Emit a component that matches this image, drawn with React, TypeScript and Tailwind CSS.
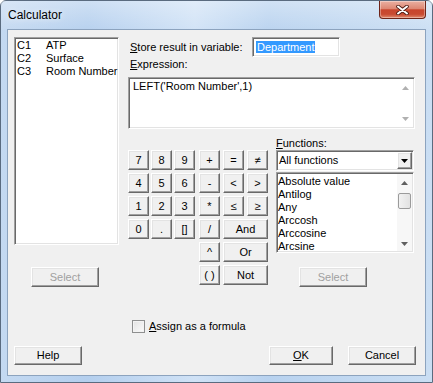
import React from "react";

type BtnProps = {
  children?: React.ReactNode;
  className?: string;
  disabled?: boolean;
};

function Raised({ children, className = "", disabled = false }: BtnProps) {
  return (
    <div
      className={
        "flex items-center justify-center bg-[#f0f0f0] border border-t-white border-l-white border-r-[#696969] border-b-[#696969] shadow-[inset_-1px_-1px_0_#a0a0a0,inset_1px_1px_0_#e3e3e3] text-[11px] leading-none " +
        (disabled ? "text-[#a0a0a0] " : "text-black ") +
        className
      }
    >
      {children}
    </div>
  );
}

const sunken =
  "bg-white border border-t-[#a0a0a0] border-l-[#a0a0a0] border-r-white border-b-white shadow-[inset_1px_1px_0_#696969,inset_-1px_-1px_0_#e3e3e3]";

function Tri({ up, color }: { up?: boolean; color: string }) {
  return (
    <svg width="7" height="4" viewBox="0 0 7 4">
      {up ? (
        <path d="M0 4 L3.5 0 L7 4 Z" fill={color} />
      ) : (
        <path d="M0 0 L7 0 L3.5 4 Z" fill={color} />
      )}
    </svg>
  );
}

export default function App() {
  const digits = ["7", "8", "9", "4", "5", "6", "1", "2", "3", "0", ".", "[]"];
  const funcs = ["Absolute value", "Antilog", "Any", "Arccosh", "Arccosine", "Arcsine"];
  return (
    <div className="w-[433px] h-[383px] overflow-hidden font-['Liberation_Sans',Arial,sans-serif] text-[11px] text-black">
      <div className="w-[433px] h-[383px] flex flex-col rounded-t-[6px] border border-[#5a6b7f] bg-[linear-gradient(to_right,#c4d9f1_0%,#b4cfee_20%,#d0e2f6_45%,#b8d2ef_62%,#cadef3_100%)]">
        {/* Title bar */}
        <div className="h-[29px] flex items-start bg-[linear-gradient(to_bottom,rgba(255,255,255,0.35),rgba(255,255,255,0.05))]">
          <div className="ml-[7px] mt-[6px] leading-[16px] text-[12px] text-black [text-shadow:0_0_6px_#ffffff]">
            Calculator
          </div>
          <div className="ml-auto mr-[6px] w-[47px] h-[18px] flex items-center justify-center rounded-b-[4px] border border-t-0 border-[#6e2418] bg-[linear-gradient(to_bottom,#eab0a2_0%,#dd8773_45%,#c8452d_52%,#c84a31_78%,#e08a6e_100%)] shadow-[inset_0_0_0_1px_rgba(255,255,255,0.35)]">
            <svg width="13" height="10" viewBox="0 0 13 10">
              <path d="M2 1.5 L11 8.5 M11 1.5 L2 8.5" stroke="#4b1a12" strokeWidth="3.6" strokeLinecap="round" />
              <path d="M2 1.5 L11 8.5 M11 1.5 L2 8.5" stroke="#ffffff" strokeWidth="2" strokeLinecap="round" />
            </svg>
          </div>
        </div>

        {/* Client */}
        <div className="mx-[7px] h-[345px] bg-[#f0f0f0] shadow-[0_0_0_1px_#8ca3be] flex flex-col">
          <div className="flex h-[257px]">
            {/* Left column */}
            <div className="w-[120px] pl-[6px] pt-[7px] flex flex-col">
              <div className={sunken + " w-[105px] h-[208px] pl-[2px] pt-[1px]"}>
                {[
                  ["C1", "ATP"],
                  ["C2", "Surface"],
                  ["C3", "Room Number"],
                ].map(([c, n]) => (
                  <div key={c} className="flex leading-[13px] h-[13px] whitespace-nowrap">
                    <span className="w-[29px]">{c}</span>
                    <span>{n}</span>
                  </div>
                ))}
              </div>
              <Raised disabled className="mt-[22px] ml-[17px] w-[68px] h-[20px]">
                Select
              </Raised>
            </div>

            {/* Right column */}
            <div className="w-[287px] pt-[7px] flex flex-col">
              <div className="flex h-[20px] items-center">
                <div className="w-[124px] pl-[2px] leading-[13px] whitespace-nowrap">
                  <span className="underline">S</span>tore result in variable:
                </div>
                <div className={sunken + " w-[88px] h-[20px] pl-[3px] flex items-center"}>
                  <span className="bg-[#3399ff] text-white leading-[12px] px-[1px]">Department</span>
                </div>
              </div>
              <div className="h-[20px] pl-[2px] pt-[1px] leading-[13px]">
                <span className="underline">E</span>xpression:
              </div>
              <div className={sunken + " h-[52px] flex p-[1px]"}>
                <div className="flex-1 pl-[3px] pt-[1px] leading-[13px] whitespace-nowrap">
                  LEFT('Room Number',1)
                </div>
                <div className="w-[15px] flex flex-col justify-between">
                  <div className="h-[17px] flex items-center justify-center">
                    <Tri up color="#b0b0b0" />
                  </div>
                  <div className="h-[17px] flex items-center justify-center">
                    <Tri color="#b0b0b0" />
                  </div>
                </div>
              </div>

              <div className="mt-[8px] flex">
                {/* Keypad */}
                <div className="mt-[13px] flex items-start">
                  <div className="grid grid-cols-[21px_21px_21px] auto-rows-[20px] gap-x-[2px] gap-y-[3px]">
                    {digits.map((d) => (
                      <Raised key={d}>{d}</Raised>
                    ))}
                  </div>
                  <div className="ml-[4px] grid grid-cols-[21px_21px_21px] auto-rows-[20px] gap-x-[3px] gap-y-[3px]">
                    <Raised>+</Raised>
                    <Raised>=</Raised>
                    <Raised>≠</Raised>
                    <Raised>-</Raised>
                    <Raised>&lt;</Raised>
                    <Raised>&gt;</Raised>
                    <Raised>*</Raised>
                    <Raised>≤</Raised>
                    <Raised>≥</Raised>
                    <Raised>/</Raised>
                    <Raised className="col-span-2">And</Raised>
                    <Raised>^</Raised>
                    <Raised className="col-span-2">Or</Raised>
                    <Raised>( )</Raised>
                    <Raised className="col-span-2">Not</Raised>
                  </div>
                </div>

                {/* Functions */}
                <div className="ml-[8px] w-[138px] flex flex-col">
                  <div className="h-[13px] leading-[13px]">
                    <span className="underline">F</span>unctions:
                  </div>
                  <div className={sunken + " h-[21px] p-[1px] flex items-stretch"}>
                    <div className="flex-1 pl-[1px] flex items-center leading-[13px]">All functions</div>
                    <Raised className="w-[15px]">
                      <Tri color="#000000" />
                    </Raised>
                  </div>
                  <div className={sunken + " mt-[1px] h-[81px] p-[1px] flex overflow-hidden"}>
                    <div className="flex-1 pt-[1px] overflow-hidden">
                      {funcs.map((f) => (
                        <div key={f} className="h-[13px] leading-[13px] whitespace-nowrap">
                          {f}
                        </div>
                      ))}
                    </div>
                    <div className="w-[15px] bg-[#f7f7f7] flex flex-col">
                      <div className="h-[17px] flex items-center justify-center">
                        <Tri up color="#606060" />
                      </div>
                      <div className="mt-[2px] mx-auto w-[13px] h-[16px] rounded-[2px] border border-[#9b9b9b] bg-[linear-gradient(to_right,#f2f2f2,#e2e2e2)]" />
                      <div className="mt-auto h-[15px] flex items-center justify-center">
                        <Tri color="#606060" />
                      </div>
                    </div>
                  </div>
                  <Raised disabled className="mt-[14px] ml-[23px] w-[68px] h-[20px]">
                    Select
                  </Raised>
                </div>
              </div>
            </div>
          </div>

          {/* Checkbox row */}
          <div className="mt-[33px] h-[13px] pl-[124px] flex items-center">
            <div className="w-[13px] h-[13px] border border-[#8e8f8f] bg-[linear-gradient(135deg,#e2e2e2,#fbfbfb)] shadow-[inset_0_0_0_1px_#f3f3f3]" />
            <div className="ml-[4px] leading-[13px]">
              <span className="underline">A</span>ssign as a formula
            </div>
          </div>

          {/* Buttons row */}
          <div className="mt-[13px] flex pr-[9px]">
            <Raised className="ml-[6px] w-[68px] h-[19px]">Help</Raised>
            <Raised className="ml-auto w-[64px] h-[19px]">
              <span className="underline">O</span>K
            </Raised>
            <Raised className="ml-[15px] w-[68px] h-[19px]">Cancel</Raised>
          </div>
        </div>
      </div>
    </div>
  );
}
